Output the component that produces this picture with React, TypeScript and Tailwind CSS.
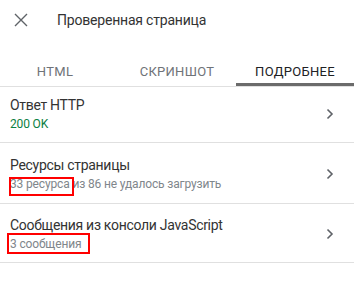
import React from "react";

const font = { fontFamily: "Roboto, 'Noto Sans', Arial, sans-serif" };

function Chevron() {
  return (
    <svg width="8" height="12" viewBox="0 0 8 12" className="shrink-0">
      <path d="M1.5 1.5 L6 6 L1.5 10.5" fill="none" stroke="#5f6368" strokeWidth="1.6" />
    </svg>
  );
}

function Row({
  title,
  sub,
  subClass,
  pt,
  pb,
  box,
}: {
  title: string;
  sub: string;
  subClass: string;
  pt: string;
  pb: string;
  box?: string;
}) {
  return (
    <div className={`relative flex items-center border-b border-[#e0e0e0] pl-[10px] pr-[20px] ${pt} ${pb}`}>
      <div className="flex-1 flex flex-col">
        <div className="text-[14px] leading-[20px] tracking-[-0.3px] text-[#333333]">{title}</div>
        <div className={`mt-[1px] text-[12px] leading-[16px] tracking-[-0.15px] ${subClass}`}>{sub}</div>
      </div>
      <Chevron />
      {box ? <div className={`absolute border-2 border-[#ff0000] ${box}`} /> : null}
    </div>
  );
}

export default function App() {
  return (
    <div className="w-[354px] h-[282px] bg-white overflow-hidden" style={font}>
      <div className="h-[40px] flex items-center">
        <svg width="14" height="14" viewBox="0 0 14 14" className="ml-[14px]">
          <path d="M1 1 L13 13 M13 1 L1 13" stroke="#5f6368" strokeWidth="1.4" />
        </svg>
        <div className="ml-[29px] text-[14px] tracking-[-0.2px] text-[#333333]">Проверенная страница</div>
      </div>
      <div className="grid grid-cols-3 h-[47px] border-b border-[#e0e0e0]">
        <div className="relative flex justify-center pt-[24px] pr-[8px] text-[13px] leading-[16px] tracking-[0.3px] text-[#6f7378]">
          HTML
        </div>
        <div className="relative flex justify-center pt-[24px] text-[13px] leading-[16px] tracking-[0.3px] text-[#6f7378]">
          СКРИНШОТ
        </div>
        <div className="relative flex justify-center pt-[24px] text-[13px] leading-[16px] tracking-[0.3px] text-[#202124]">
          ПОДРОБНЕЕ
          <div className="absolute left-0 right-0 bottom-0 h-[3px] bg-[#6b6b6b]" />
        </div>
      </div>
      <Row title="Ответ HTTP" sub="200 OK" subClass="text-[#0b8043]" pt="pt-[8px]" pb="pb-[10px]" />
      <Row
        title="Ресурсы страницы"
        sub="33 ресурса из 86 не удалось загрузить"
        subClass="text-[#80868b]"
        pt="pt-[12px]"
        pb="pb-[11px]"
        box="left-[9px] top-[34px] w-[65px] h-[19px]"
      />
      <Row
        title="Сообщения из консоли JavaScript"
        sub="3 сообщения"
        subClass="text-[#80868b]"
        pt="pt-[11px]"
        pb="pb-[10px]"
        box="left-[7px] top-[29px] w-[83px] h-[21px]"
      />
    </div>
  );
}
